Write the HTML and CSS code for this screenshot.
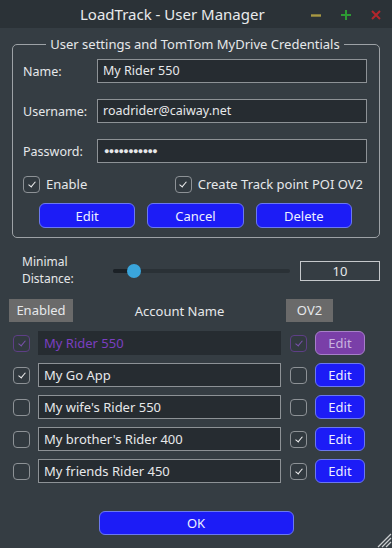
FILE: index.html
```html
<!DOCTYPE html>
<html lang="en">
<head>
    <meta charset="UTF-8">
    <meta name="viewport" content="width=device-width, initial-scale=1.0">
    <title>LoadTrack - User Manager</title>
    <link rel="stylesheet" href="styles.css">
</head>
<body>
    <div class="titlebar">
        <div class="title">LoadTrack - User Manager</div>
        <div class="win-buttons">
            <svg width="12" height="12" viewBox="0 0 12 12"><path d="M1 6.5h10" stroke="#a89843" stroke-width="2.4"/></svg>
            <svg width="12" height="12" viewBox="0 0 12 12"><path d="M1 6h10M6 1v10" stroke="#2d9a33" stroke-width="2"/></svg>
            <svg width="12" height="12" viewBox="0 0 12 12"><path d="M2 2l8 8M10 2l-8 8" stroke="#b3262c" stroke-width="2"/></svg>
        </div>
    </div>

    <fieldset class="settings">
        <legend>User settings and TomTom MyDrive Credentials</legend>
        <div class="field">
            <label>Name:</label>
            <div class="input">My Rider 550</div>
        </div>
        <div class="field">
            <label>Username:</label>
            <div class="input">roadrider@caiway.net</div>
        </div>
        <div class="field">
            <label>Password:</label>
            <div class="input dots">●●●●●●●●●●●</div>
        </div>
        <div class="options">
            <div class="check-label"><span class="cb on"></span>Enable</div>
            <div class="check-label right"><span class="cb on"></span>Create Track point POI OV2</div>
        </div>
        <div class="actions">
            <button class="btn">Edit</button>
            <button class="btn">Cancel</button>
            <button class="btn">Delete</button>
        </div>
    </fieldset>

    <div class="distance">
        <div class="distance-label">Minimal<br>Distance:</div>
        <div class="slider">
            <div class="slider-fill"></div>
            <div class="slider-knob"></div>
        </div>
        <div class="distance-value">10</div>
    </div>

    <div class="list-header">
        <div class="head-box enabled">Enabled</div>
        <div class="head-name">Account Name</div>
        <div class="head-box ov2">OV2</div>
    </div>

    <div class="accounts">
        <div class="account current">
            <span class="cb on"></span>
            <div class="input">My Rider 550</div>
            <span class="cb on"></span>
            <button class="btn small">Edit</button>
        </div>
        <div class="account">
            <span class="cb on"></span>
            <div class="input">My Go App</div>
            <span class="cb"></span>
            <button class="btn small">Edit</button>
        </div>
        <div class="account">
            <span class="cb"></span>
            <div class="input">My wife's Rider 550</div>
            <span class="cb"></span>
            <button class="btn small">Edit</button>
        </div>
        <div class="account">
            <span class="cb"></span>
            <div class="input">My brother's Rider 400</div>
            <span class="cb on"></span>
            <button class="btn small">Edit</button>
        </div>
        <div class="account">
            <span class="cb"></span>
            <div class="input">My friends Rider 450</div>
            <span class="cb on"></span>
            <button class="btn small">Edit</button>
        </div>
    </div>

    <div class="footer">
        <button class="btn ok">OK</button>
    </div>

    <svg class="grip" width="18" height="18" viewBox="0 0 18 18">
        <path d="M17 4L4 17M17 8L8 17M17 12L12 17" stroke="#c9ccce" stroke-width="1.3"/>
    </svg>
</body>
</html>
```

FILE: styles.css
```css
body {
    font-family: "Noto Sans", sans-serif;
    font-size: 12.5px;
    color: #e6e8ea;
    margin: 0;
    padding: 0;
    width: 392px;
    height: 548px;
    background-color: #353d43;
    position: relative;
    overflow: hidden;
}
.titlebar {
    height: 28px;
    background-color: #2b3237;
    display: flex;
    align-items: center;
}
.title {
    font-size: 15px;
    padding-left: 80px;
    color: #e8eaec;
}
.win-buttons {
    margin-left: auto;
    display: flex;
    gap: 18px;
    padding-right: 10px;
    padding-top: 1px;
}
.settings {
    margin: 8px 12px 0 12px;
    padding: 7px 12px 9px 10px;
    border: 1px solid #9da2a6;
    border-radius: 5px;
}
.settings legend {
    margin: 0 auto;
    padding: 0 4px;
    line-height: 16px;
    font-size: 13px;
}
.field {
    display: flex;
    align-items: center;
    height: 24px;
    margin-bottom: 16px;
}
.field label {
    width: 74px;
}
.input {
    flex: 1;
    height: 22px;
    line-height: 22px;
    padding: 0 5px;
    background-color: #262c31;
    border: 1px solid #8d9296;
    white-space: nowrap;
    overflow: hidden;
}
.input.dots {
    font-size: 9px;
    letter-spacing: -0.6px;
    padding-left: 6px;
}
.options {
    display: flex;
    align-items: center;
    margin-top: -3px;
    height: 16px;
}
.check-label {
    display: flex;
    align-items: center;
    gap: 6px;
    font-size: 13px;
}
.check-label.right {
    margin-left: auto;
    padding-right: 4px;
}
.cb {
    width: 15px;
    height: 15px;
    border: 1px solid #8d9296;
    border-radius: 4px;
    background-color: #323a40;
    display: flex;
    align-items: center;
    justify-content: center;
    flex-shrink: 0;
}
.cb.on::after {
    content: "";
    width: 3px;
    height: 6px;
    border-right: 1.6px solid #f2f2f2;
    border-bottom: 1.6px solid #f2f2f2;
    transform: rotate(40deg);
    margin-top: -2px;
}
.actions {
    display: flex;
    gap: 12px;
    padding: 0 15px 0 16px;
    margin-top: 11px;
}
.btn {
    font-family: "Noto Sans", sans-serif;
    font-size: 13px;
    color: #eef0ff;
    background-color: #1c1cf6;
    border: 1px solid #6b78f0;
    border-radius: 6px;
    height: 25px;
    padding: 0;
}
.actions .btn {
    flex: 1;
}
.distance {
    display: flex;
    align-items: center;
    margin: 16px 12px 0 22px;
}
.distance-label {
    width: 91px;
    line-height: 16.5px;
    font-size: 12px;
}
.slider {
    width: 177px;
    height: 4px;
    background-color: #2a3136;
    border-radius: 2px;
    position: relative;
    margin-right: 10px;
}
.slider-fill {
    width: 21px;
    height: 4px;
    background-color: #1b2126;
    border-radius: 2px;
}
.slider-knob {
    position: absolute;
    left: 14px;
    top: -5px;
    width: 14px;
    height: 14px;
    border-radius: 50%;
    background-color: #3aa5db;
}
.distance-value {
    flex: 1;
    height: 18px;
    line-height: 18px;
    border: 1px solid #c5c8cb;
    text-align: center;
    font-size: 13px;
}
.list-header {
    display: flex;
    align-items: center;
    margin: 12px 0 0 9px;
    height: 23px;
    font-size: 13px;
}
.head-box {
    background-color: #6a6a6a;
    height: 23px;
    line-height: 23px;
    text-align: center;
}
.head-box.enabled {
    width: 64px;
}
.head-box.ov2 {
    width: 47px;
}
.head-name {
    width: 213px;
    text-align: center;
}
.accounts {
    display: flex;
    flex-direction: column;
    gap: 8px;
    margin-top: 9px;
    padding-left: 13px;
}
.account {
    display: flex;
    align-items: center;
    height: 24px;
    font-size: 13px;
}
.account .input {
    flex: none;
    width: 231px;
    margin: 0 9px 0 8px;
}
.btn.small {
    width: 50px;
    height: 24px;
    margin-left: 8px;
}
.account.current .input {
    border-color: #262c31;
    color: #7b3fc0;
}
.account.current .cb {
    border-color: #5e3f86;
}
.account.current .cb.on::after {
    border-color: #7b52ae;
}
.account.current .btn {
    background-color: #7a3fa8;
    border-color: #a77fc9;
    color: #c9b3df;
}
.footer {
    display: flex;
    justify-content: center;
    margin-top: 28px;
}
.btn.ok {
    width: 195px;
    height: 24px;
}
.grip {
    position: absolute;
    right: 0;
    bottom: 0;
}
```
